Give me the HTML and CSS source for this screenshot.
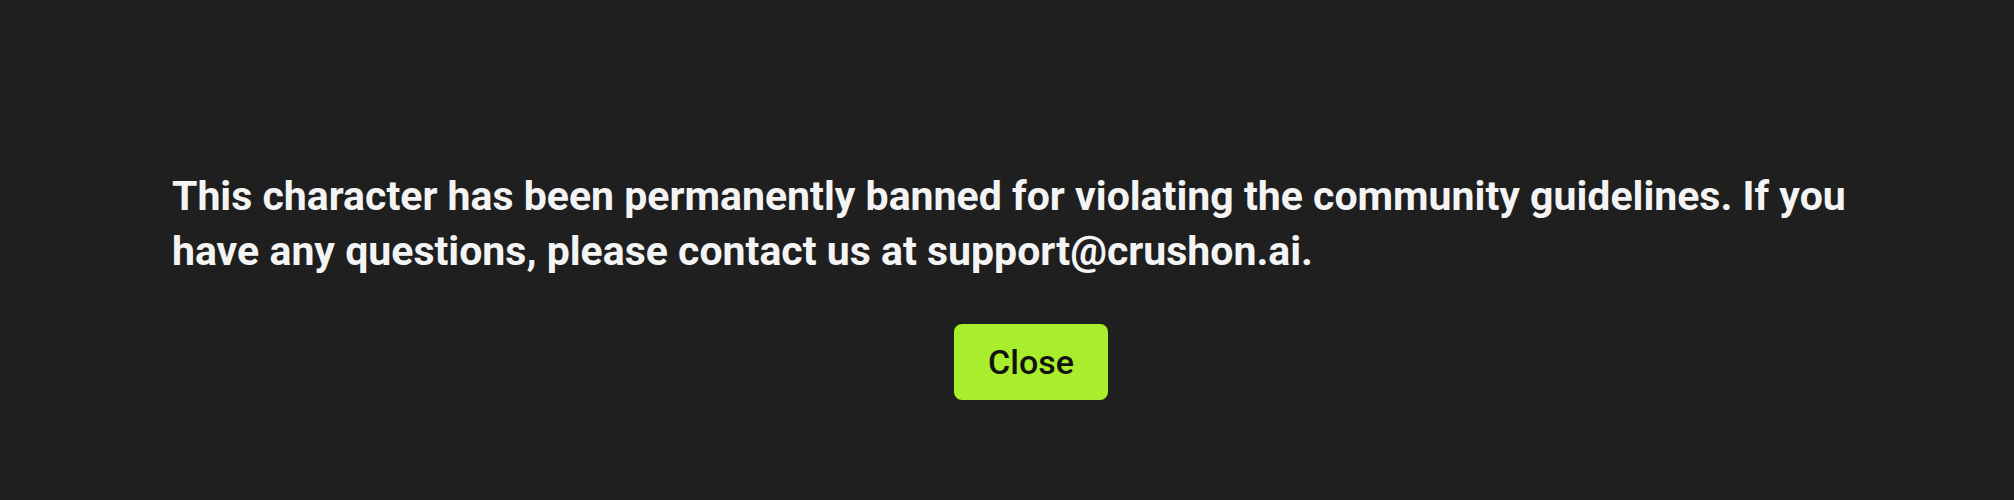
FILE: index.html
```html
<!DOCTYPE html>
<html lang="en">
<head>
    <meta charset="UTF-8">
    <meta name="viewport" content="width=device-width, initial-scale=1.0">
    <title>Character banned</title>
    <link rel="stylesheet" href="styles.css">
</head>
<body>
    <!-- Aviso de personaje bloqueado -->
    <div id="aviso">
        <p class="mensaje">This character has been permanently banned for violating the community guidelines. If you have any questions, please contact us at support@crushon.ai.</p>
        <button type="button" class="cerrar">Close</button>
    </div>
</body>
</html>
```

FILE: styles.css
```css
body {
    margin: 0;
    height: 500px;
    background-color: #1f1f1f;
    font-family: 'Roboto', 'Liberation Sans', sans-serif;
}
#aviso {
    width: 1718px;
    margin-left: 172px;
    padding-top: 169px;
}
.mensaje {
    margin: 0;
    color: #f4f4f4;
    font-size: 41px;
    font-weight: 700;
    line-height: 55px;
}
.cerrar {
    display: flex;
    align-items: center;
    justify-content: center;
    width: 154px;
    height: 76px;
    margin: 45px auto 0;
    padding: 0;
    background-color: #a8ee2c;
    color: #111;
    border: none;
    border-radius: 8px;
    font-family: 'Roboto', 'Liberation Sans', sans-serif;
    font-size: 34px;
    font-weight: 500;
    cursor: pointer;
}
```
